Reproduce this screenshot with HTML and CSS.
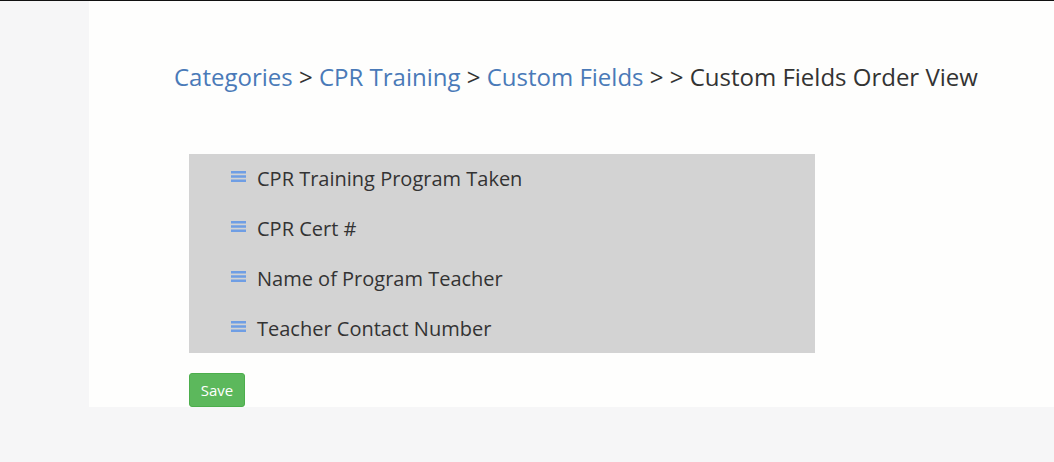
FILE: index.html
```html
<!DOCTYPE html>
<html lang="en">

<head>
  <meta charset="UTF-8">
  <meta name="viewport" content="width=device-width, initial-scale=1.0">
  <title>Custom Fields Order View</title>
  <link rel="stylesheet" href="styles.css">
</head>

<body>
  <div class="page">
    <div class="sidebar"></div>
    <div class="content">
      <h3 class="crumbs">
        <a href="javascript:;">Categories</a> &gt;
        <a href="javascript:;">CPR Training</a> &gt;
        <a href="javascript:;">Custom Fields</a> &gt; &gt; Custom Fields Order View
      </h3>
      <ul class="fields">
        <li><span class="handle"><svg width="15" height="11" viewBox="0 0 15 11"><rect y="0" width="15" height="2.5"/><rect y="4.25" width="15" height="2.5"/><rect y="8.5" width="15" height="2.5"/></svg></span>CPR Training Program Taken</li>
        <li><span class="handle"><svg width="15" height="11" viewBox="0 0 15 11"><rect y="0" width="15" height="2.5"/><rect y="4.25" width="15" height="2.5"/><rect y="8.5" width="15" height="2.5"/></svg></span>CPR Cert #</li>
        <li><span class="handle"><svg width="15" height="11" viewBox="0 0 15 11"><rect y="0" width="15" height="2.5"/><rect y="4.25" width="15" height="2.5"/><rect y="8.5" width="15" height="2.5"/></svg></span>Name of Program Teacher</li>
        <li><span class="handle"><svg width="15" height="11" viewBox="0 0 15 11"><rect y="0" width="15" height="2.5"/><rect y="4.25" width="15" height="2.5"/><rect y="8.5" width="15" height="2.5"/></svg></span>Teacher Contact Number</li>
      </ul>
      <button class="save">Save</button>
    </div>
  </div>
</body>

</html>
```

FILE: styles.css
```css
* {
  padding: 0;
  margin: 0;
  box-sizing: border-box;
}

body {
  background: #f6f6f7;
  font-family: "Open Sans", "Liberation Sans", sans-serif;
  color: #333;
  border-top: solid 1px #111;
}

.page {
  display: flex;
  height: 406px;
}

.sidebar {
  width: 89px;
  flex: none;
}

.content {
  flex: 1;
  background: #fefefd;
  padding: 0 0 0 100px;
}

.crumbs {
  font-weight: normal;
  font-size: 24px;
  line-height: 30px;
  margin: 61px 0 0 -15px;
  color: #333;
}

.crumbs a {
  color: #4a7ab8;
  text-decoration: none;
}

.fields {
  list-style: none;
  width: 626px;
  background: #d3d3d3;
  margin-top: 62px;
}

.fields li {
  display: flex;
  align-items: center;
  height: 49.75px;
  padding-left: 42px;
  font-size: 20px;
}

.handle {
  display: flex;
  margin-right: 11px;
  margin-top: -4px;
}

.handle svg {
  fill: #6f9ee4;
}

.save {
  margin-top: 20px;
  width: 56px;
  height: 34px;
  background: #5cb85c;
  border: solid 1px #4cae4c;
  border-radius: 3px;
  color: white;
  font-family: "Open Sans", "Liberation Sans", sans-serif;
  font-size: 15px;
}
```
